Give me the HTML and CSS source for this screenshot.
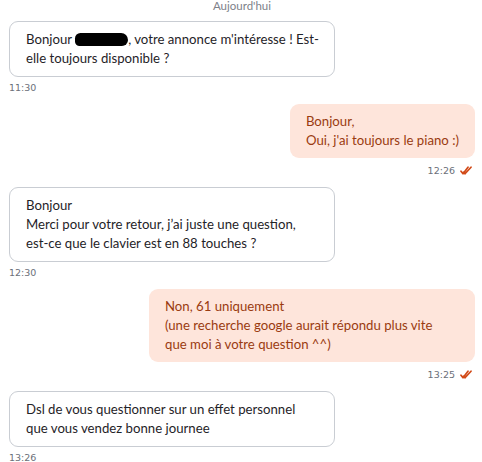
FILE: index.html
```html
<!DOCTYPE html>
<html lang="fr">
<head>
    <meta charset="UTF-8">
    <meta name="viewport" content="width=device-width, initial-scale=1.0">
    <title>Messages</title>
    <link rel="stylesheet" href="styles.css">
</head>
<body>
    <div class="thread">
        <div class="day">Aujourd'hui</div>

        <div class="msg received">
            <div class="bubble wide">Bonjour <span class="blur"></span>, votre annonce m'intéresse ! Est-<br>elle toujours disponible ?</div>
            <div class="meta">11:30</div>
        </div>

        <div class="msg sent">
            <div class="bubble">Bonjour,<br>Oui, j'ai toujours le piano :)</div>
            <div class="meta">12:26
                <svg class="ticks" width="12" height="9" viewBox="0 0 12 9"><path d="M1 5.2 L3 7.8 L8 1.2 M5 7.8 L11 1.2 M3.6 6.2 L5 7.8" fill="none" stroke="#d24a18" stroke-width="1.7" stroke-linecap="round" stroke-linejoin="round"/></svg>
            </div>
        </div>

        <div class="msg received">
            <div class="bubble wide">Bonjour<br>Merci pour votre retour, j’ai juste une question,<br>est-ce que le clavier est en 88 touches ?</div>
            <div class="meta">12:30</div>
        </div>

        <div class="msg sent">
            <div class="bubble wide">Non, 61 uniquement<br>(une recherche google aurait répondu plus vite<br>que moi à votre question ^^)</div>
            <div class="meta">13:25
                <svg class="ticks" width="12" height="9" viewBox="0 0 12 9"><path d="M1 5.2 L3 7.8 L8 1.2 M5 7.8 L11 1.2 M3.6 6.2 L5 7.8" fill="none" stroke="#d24a18" stroke-width="1.7" stroke-linecap="round" stroke-linejoin="round"/></svg>
            </div>
        </div>

        <div class="msg received">
            <div class="bubble wide">Dsl de vous questionner sur un effet personnel<br>que vous vendez bonne journee</div>
            <div class="meta">13:26</div>
        </div>
    </div>
</body>
</html>
```

FILE: styles.css
```css
body {
    margin: 0;
    background-color: #ffffff;
    font-family: Lato, "Noto Sans", sans-serif;
    color: #1f2328;
}

.thread {
    display: flex;
    flex-direction: column;
    padding: 0 7px 0 9px;
}

.day {
    text-align: center;
    font-size: 11.5px;
    line-height: 12px;
    color: #7d8189;
    margin-bottom: 9px;
}

.msg {
    display: flex;
    flex-direction: column;
    margin-bottom: 9px;
}

.msg.received {
    align-items: flex-start;
}

.msg.sent {
    align-items: flex-end;
}

.bubble {
    font-size: 13.2px;
    line-height: 19px;
    padding: 8px 16px;
    border-radius: 9px;
    box-sizing: border-box;
    white-space: nowrap;
}

.bubble.wide {
    width: 326px;
}

.received .bubble {
    border: 1px solid #c9cdd3;
    background-color: #ffffff;
}

.sent .bubble {
    background-color: #fee5db;
    color: #9a3b10;
}

.blur {
    display: inline-block;
    width: 53px;
    height: 13px;
    background-color: #000;
    border-radius: 7px 9px 8px 6px;
    vertical-align: -2px;
}

.meta {
    display: flex;
    align-items: center;
    gap: 5px;
    margin-top: 4px;
    font-family: "DejaVu Sans", sans-serif;
    font-size: 9.5px;
    line-height: 14px;
    color: #6b7079;
}

.sent .meta {
    margin-top: 5px;
    margin-right: 3px;
    line-height: 15px;
}
```
